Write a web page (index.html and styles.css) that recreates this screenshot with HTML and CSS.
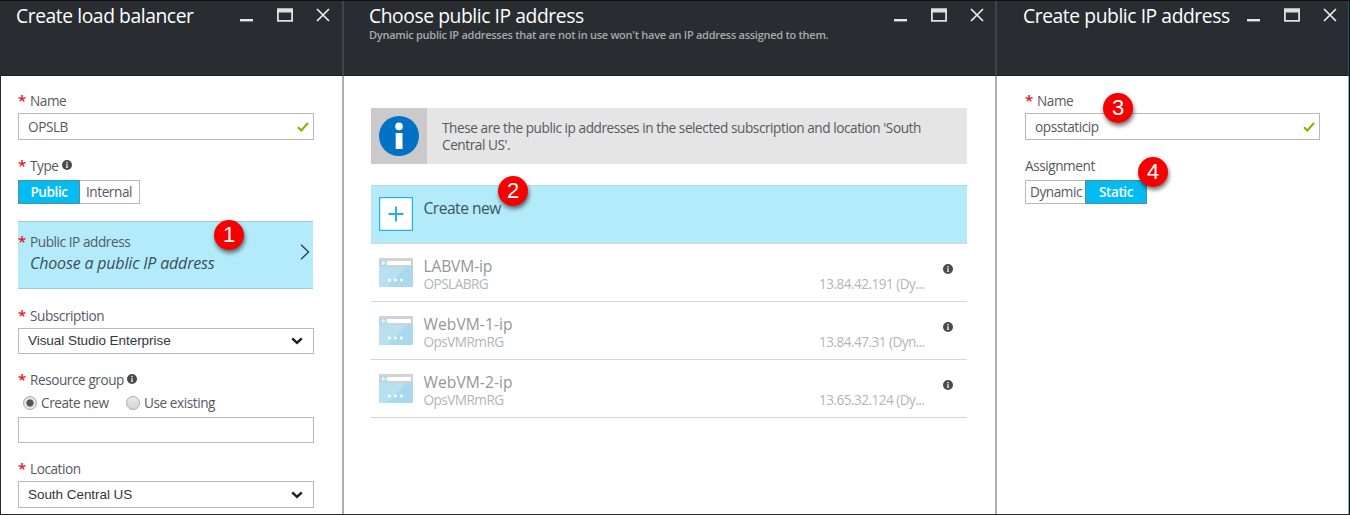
FILE: index.html
```html
<!DOCTYPE html>
<html lang="en">
<head>
<meta charset="utf-8">
<title>Create load balancer</title>
<link rel="stylesheet" href="styles.css">
</head>
<body>
<svg class="defs" width="0" height="0">
  <symbol id="win" viewBox="0 0 92 18">
    <rect x="0" y="14" width="13" height="2.4" fill="#e6e6e6"/>
    <path d="M37 3.2h16v13.5h-16zM38.8 7.6v7.3h12.4v-7.3z" fill="#e0e0e0" fill-rule="evenodd"/>
    <path d="M77 4l12 12M89 4l-12 12" stroke="#ededed" stroke-width="1.7" fill="none"/>
  </symbol>
  <symbol id="info" viewBox="0 0 10 10">
    <circle cx="5" cy="5" r="5" fill="#464b51"/>
    <circle cx="5" cy="2.6" r=".9" fill="#ddd"/>
    <path d="M3.9 4.2h1.9v3.2h.5v.7H3.8v-.7h.5V4.9h-.4z" fill="#ddd"/>
  </symbol>
  <symbol id="check" viewBox="0 0 12 10">
    <path d="M1 5.2l3.3 3.3L11 1" stroke="#76b900" stroke-width="2" fill="none"/>
  </symbol>
  <symbol id="caret" viewBox="0 0 12 8">
    <path d="M1.2 1.4L6 5.9l4.8-4.5" stroke="#1b1f23" stroke-width="2.5" fill="none"/>
  </symbol>
  <symbol id="site" viewBox="0 0 34 29">
    <rect width="34" height="29" rx="1" fill="#a9d9ed"/>
    <path d="M0 9h27L8 29H1a1 1 0 0 1-1-1z" fill="#b9e0f0"/>
    <path d="M0 9V1a1 1 0 0 1 1-1h32a1 1 0 0 1 1 1v8z" fill="#d1d2d3"/>
    <rect x="8" y="3" width="24" height="4" fill="#fff"/>
    <circle cx="4.8" cy="5" r="3.5" fill="#a9dcf2"/>
    <path d="M7.3 5H3M4.8 3L2.9 5l1.9 2" stroke="#fff" stroke-width="1" fill="none"/>
    <circle cx="10.4" cy="22" r="1.5" fill="#fff"/><circle cx="16.4" cy="22" r="1.5" fill="#fff"/><circle cx="22.4" cy="22" r="1.5" fill="#fff"/>
  </symbol>
</svg>
<main class="shell">
  <section class="blade blade-lb">
    <header class="head">
      <h1 class="title">Create load balancer</h1>
      <svg class="win"><use href="#win"/></svg>
    </header>
    <div class="form">
      <div class="label first"><i class="req">*</i><span>Name</span></div>
      <div class="input"><span>OPSLB</span><svg class="check"><use href="#check"/></svg></div>
      <div class="label"><i class="req">*</i><span>Type</span><svg class="info"><use href="#info"/></svg></div>
      <div class="toggle"><span class="opt on">Public</span><span class="opt">Internal</span></div>
      <div class="selector">
        <div class="label"><i class="req">*</i><span>Public IP address</span></div>
        <div class="choice">Choose a public IP address</div>
        <svg class="chev" viewBox="0 0 10 16"><path d="M1 .8L8.6 8 1 15.2" stroke="#2b3a42" stroke-width="1.3" fill="none"/></svg>
      </div>
      <div class="label sub"><i class="req">*</i><span>Subscription</span></div>
      <div class="input select"><span>Visual Studio Enterprise</span><svg class="caret"><use href="#caret"/></svg></div>
      <div class="label"><i class="req">*</i><span>Resource group</span><svg class="info"><use href="#info"/></svg></div>
      <div class="radios">
        <span class="radio picked"></span><span class="rtext r1">Create new</span>
        <span class="radio"></span><span class="rtext">Use existing</span>
      </div>
      <div class="input blank"></div>
      <div class="label"><i class="req">*</i><span>Location</span></div>
      <div class="input select tall"><span>South Central US</span><svg class="caret"><use href="#caret"/></svg></div>
    </div>
    <b class="badge b1">1</b>
  </section>
  <section class="blade blade-ip">
    <header class="head">
      <div>
        <h1 class="title">Choose public IP address</h1>
        <p class="subtitle">Dynamic public IP addresses that are not in use won't have an IP address assigned to them.</p>
      </div>
      <svg class="win"><use href="#win"/></svg>
    </header>
    <div class="list">
      <div class="banner">
        <div class="bicon"><svg viewBox="0 0 40 40" width="40" height="40"><circle cx="20" cy="20" r="20" fill="#0072c6"/><circle cx="20" cy="10.4" r="3.8" fill="#fff"/><rect x="16.7" y="17" width="6.8" height="16" fill="#fff"/></svg></div>
        <p class="btext">These are the public ip addresses in the selected subscription and location 'South Central US'.</p>
      </div>
      <div class="row create">
        <svg class="ricon plus" viewBox="0 0 34 34"><rect x=".6" y=".6" width="32.8" height="32.8" fill="#fff" stroke="#1cb0ee" stroke-width="1.2"/><path d="M17 9.5v15M9.5 17h15" stroke="#1cb0ee" stroke-width="1.9"/></svg>
        <div class="name">Create new</div>
      </div>
      <div class="row">
        <svg class="ricon"><use href="#site"/></svg>
        <div class="names"><div class="name">LABVM-ip</div><div class="group">OPSLABRG</div></div>
        <div class="addr">13.84.42.191 (Dy...</div><svg class="info"><use href="#info"/></svg>
      </div>
      <div class="row">
        <svg class="ricon"><use href="#site"/></svg>
        <div class="names"><div class="name wide">WebVM-1-ip</div><div class="group">OpsVMRmRG</div></div>
        <div class="addr">13.84.47.31 (Dyn...</div><svg class="info"><use href="#info"/></svg>
      </div>
      <div class="row">
        <svg class="ricon"><use href="#site"/></svg>
        <div class="names"><div class="name wide">WebVM-2-ip</div><div class="group">OpsVMRmRG</div></div>
        <div class="addr">13.65.32.124 (Dy...</div><svg class="info"><use href="#info"/></svg>
      </div>
    </div>
    <b class="badge b2">2</b>
  </section>
  <section class="blade blade-new">
    <header class="head">
      <h1 class="title">Create public IP address</h1>
      <svg class="win"><use href="#win"/></svg>
    </header>
    <div class="form">
      <div class="label first"><i class="req">*</i><span>Name</span></div>
      <div class="input"><span>opsstaticip</span><svg class="check"><use href="#check"/></svg></div>
      <div class="label"><span>Assignment</span></div>
      <div class="toggle"><span class="opt">Dynamic</span><span class="opt on">Static</span></div>
    </div>
    <b class="badge b3">3</b>
    <b class="badge b4">4</b>
  </section>
</main>
</body>
</html>
```
FILE: styles.css
```css
* { box-sizing: border-box; }
body { margin: 0; font: 13.6px/20px "Open Sans", "Noto Sans", sans-serif; letter-spacing: -.43px; color: #565a5f; background: #fff; }
h1, p { margin: 0; font-weight: 400; }
svg { display: block; flex: none; }
.defs { position: absolute; }
.shell { display: flex; width: 1350px; height: 515px; overflow: hidden; border: 1px solid #111; border-left-color: #2b2b2b; border-bottom-color: #2b2b2b; }
.blade { position: relative; flex: none; white-space: nowrap; }
.blade-lb { width: 343px; border-right: 2px solid #acaeb0; }
.blade-ip { width: 653px; border-right: 2px solid #acaeb0; }
.blade-new { flex: 1; border-right: 1px solid #79b4d4; }
.head { display: flex; justify-content: space-between; height: 75px; margin-right: -2px; background: #292d31; border-bottom: 1px solid #1d1e29; border-right: 2px solid #414549; color: #fff; }
.blade-new .head { margin-right: -1px; border-right: 1px solid #234f68; }
.blade-lb .head { padding: 0 10px 0 15px; }
.blade-ip .head { padding: 0 9px 0 25px; }
.blade-new .head { padding: 0 9px 0 26px; }
.title { font-size: 19.3px; line-height: 30px; letter-spacing: -.43px; }
.subtitle { font-size: 11px; line-height: 14px; margin-top: -3px; font-weight: 600; letter-spacing: -.27px; color: #a7a9ab; }
.win { width: 92px; height: 18px; margin-top: 4px; }
.form { width: 296px; margin-left: 17px; }
.blade-new .form { width: 295px; margin-left: 28px; }
.label { display: flex; align-items: center; height: 20px; margin-top: 16px; }
.label.first { margin-top: 15px; }
.label.sub { margin-top: 17px; }
.req { width: 12px; height: 22px; font: 600 15px/20px "Open Sans", sans-serif; color: #e81123; }
.info { width: 10px; height: 10px; margin: 0 0 2px 3px; }
.input { display: flex; align-items: center; justify-content: space-between; height: 27px; margin-top: 2px; border: 1px solid #b7b9bb; padding: 0 4px 0 9px; background: #fff; }
.select { height: 26px; padding: 0 10px 0 9px; font: 13.5px/20px "Liberation Sans", Arial, sans-serif; letter-spacing: -.05px; color: #33373c; }
.tall { height: 27px; padding-top: 1px; }
.blank { margin-top: 4px; height: 26px; }
.check { width: 12px; height: 10px; }
.caret { width: 12px; height: 8px; }
.toggle { display: flex; width: 122px; height: 24px; margin-top: 4px; border: 1px solid #b7b9bb; line-height: 22px; text-align: center; }
.opt { flex: 1 1 0; }
.on { background: #00bcf2; color: #fff; font-weight: 600; outline: 1px solid #5e8a99; }
.selector { position: relative; width: 295px; height: 68px; margin-top: 17px; padding-top: 10px; background: #b3ebfa; border: solid #a9c6cf; border-width: 1px 0; }
.selector .label { margin: 0; }
.choice { margin-left: 12px; font-size: 16px; line-height: 22px; letter-spacing: -.18px; font-style: italic; color: #38505a; }
.chev { position: absolute; right: 3px; top: 22px; width: 10px; height: 16px; }
.radios { display: flex; align-items: center; height: 20px; margin-top: 3px; padding-left: 5px; }
.radio { width: 14px; height: 14px; border-radius: 50%; border: 1px solid #aaa; background: linear-gradient(#e9e9e9, #d6d6d6); }
.picked { background: radial-gradient(circle, #555 0 3.2px, #e4e4e4 4px); }
.rtext { margin-left: 4px; }
.r1 { width: 85px; }
.list { width: 596px; margin: 32px 0 0 27px; }
.banner { display: flex; height: 56px; background: #e5e5e5; }
.bicon { display: flex; align-items: center; justify-content: center; flex: none; width: 56px; background: #cacaca; }
.btext { width: 500px; margin-left: 15px; padding-top: 12px; line-height: 16.5px; white-space: normal; }
.row { display: flex; position: relative; height: 58px; border-bottom: 1px solid #d6d6d6; padding: 14px 14px 0 8px; }
.create { height: 59px; margin-top: 21px; background: #b3ebfa; border-top: 1px solid #b8d6de; padding-top: 12px; }
.ricon { width: 34px; height: 29px; margin-right: 10.5px; }
.plus { height: 34px; margin-top: -1px; }
.name { font-size: 15.6px; line-height: 20px; letter-spacing: -.15px; color: #94979a; }
.name.wide { letter-spacing: .07px; }
.create .name { color: #3f545d; letter-spacing: -.5px; }
.names { width: 395.5px; margin-top: -2px; }
.group, .addr { font-size: 13.6px; line-height: 18px; letter-spacing: -.54px; color: #b4b6b8; }
.group { margin-top: -1px; }
.addr { width: 120px; margin-top: 17px; }
.row .info { margin: 6px 0 0 4px; }
.badge { position: absolute; width: 30px; height: 30px; border-radius: 50%; background: #f80000; color: #fff; font: 400 22px/30px "Liberation Sans", Arial, sans-serif; letter-spacing: 0; text-align: center; box-shadow: 1px 3px 4px rgba(0,0,0,.55); }
.b1 { left: 213px; top: 219px; }
.b2 { left: 154px; top: 175px; }
.b3 { left: 106px; top: 92px; }
.b4 { left: 141px; top: 156px; }
```
